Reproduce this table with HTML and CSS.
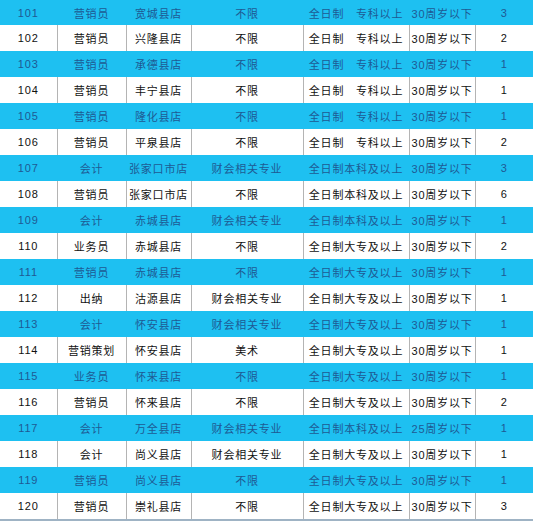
FILE: index.html
```html
<!DOCTYPE html>
<html lang="zh-CN">
<head>
<meta charset="utf-8">
<title>招聘岗位表</title>
<link rel="stylesheet" href="styles.css">
</head>
<body>
<table class="jobs">
  <colgroup>
    <col class="c-no"><col class="c-pos"><col class="c-store"><col class="c-major"><col class="c-edu"><col class="c-age"><col class="c-num">
  </colgroup>
  <tbody>
    <tr class="hl first"><td>101</td><td>营销员</td><td>宽城县店</td><td>不限</td><td>全日制&emsp;专科以上</td><td>30周岁以下</td><td>3</td></tr>
    <tr><td>102</td><td>营销员</td><td>兴隆县店</td><td>不限</td><td>全日制&emsp;专科以上</td><td>30周岁以下</td><td>2</td></tr>
    <tr class="hl"><td>103</td><td>营销员</td><td>承德县店</td><td>不限</td><td>全日制&emsp;专科以上</td><td>30周岁以下</td><td>1</td></tr>
    <tr><td>104</td><td>营销员</td><td>丰宁县店</td><td>不限</td><td>全日制&emsp;专科以上</td><td>30周岁以下</td><td>1</td></tr>
    <tr class="hl"><td>105</td><td>营销员</td><td>隆化县店</td><td>不限</td><td>全日制&emsp;专科以上</td><td>30周岁以下</td><td>1</td></tr>
    <tr><td>106</td><td>营销员</td><td>平泉县店</td><td>不限</td><td>全日制&emsp;专科以上</td><td>30周岁以下</td><td>2</td></tr>
    <tr class="hl"><td>107</td><td>会计</td><td>张家口市店</td><td>财会相关专业</td><td>全日制本科及以上</td><td>30周岁以下</td><td>3</td></tr>
    <tr><td>108</td><td>营销员</td><td>张家口市店</td><td>不限</td><td>全日制本科及以上</td><td>30周岁以下</td><td>6</td></tr>
    <tr class="hl"><td>109</td><td>会计</td><td>赤城县店</td><td>财会相关专业</td><td>全日制本科及以上</td><td>30周岁以下</td><td>1</td></tr>
    <tr><td>110</td><td>业务员</td><td>赤城县店</td><td>不限</td><td>全日制大专及以上</td><td>30周岁以下</td><td>2</td></tr>
    <tr class="hl"><td>111</td><td>营销员</td><td>赤城县店</td><td>不限</td><td>全日制大专及以上</td><td>30周岁以下</td><td>1</td></tr>
    <tr><td>112</td><td>出纳</td><td>沽源县店</td><td>财会相关专业</td><td>全日制大专及以上</td><td>30周岁以下</td><td>1</td></tr>
    <tr class="hl"><td>113</td><td>会计</td><td>怀安县店</td><td>财会相关专业</td><td>全日制大专及以上</td><td>30周岁以下</td><td>1</td></tr>
    <tr><td>114</td><td>营销策划</td><td>怀安县店</td><td>美术</td><td>全日制大专及以上</td><td>30周岁以下</td><td>1</td></tr>
    <tr class="hl"><td>115</td><td>业务员</td><td>怀来县店</td><td>不限</td><td>全日制大专及以上</td><td>30周岁以下</td><td>1</td></tr>
    <tr><td>116</td><td>营销员</td><td>怀来县店</td><td>不限</td><td>全日制大专及以上</td><td>30周岁以下</td><td>2</td></tr>
    <tr class="hl"><td>117</td><td>会计</td><td>万全县店</td><td>财会相关专业</td><td>全日制本科及以上</td><td>25周岁以下</td><td>1</td></tr>
    <tr><td>118</td><td>会计</td><td>尚义县店</td><td>财会相关专业</td><td>全日制大专及以上</td><td>30周岁以下</td><td>1</td></tr>
    <tr class="hl"><td>119</td><td>营销员</td><td>尚义县店</td><td>不限</td><td>全日制大专及以上</td><td>30周岁以下</td><td>1</td></tr>
    <tr class="last"><td>120</td><td>营销员</td><td>崇礼县店</td><td>不限</td><td>全日制大专及以上</td><td>30周岁以下</td><td>3</td></tr>
  </tbody>
</table>
</body>
</html>
```
FILE: styles.css
```css
html, body {
  margin: 0;
  padding: 0;
  background: #ffffff;
}

.jobs {
  width: 533px;
  border-collapse: collapse;
  table-layout: fixed;
  font-family: "Liberation Sans", "Noto Sans CJK SC", sans-serif;
  font-size: 11px;
  color: #111111;
  border-bottom: 2px solid #9fb3c4;
}

.c-no { width: 57px; }
.c-pos { width: 69px; }
.c-store { width: 65px; }
.c-major { width: 112px; }
.c-edu { width: 106px; }
.c-age { width: 66px; }
.c-num { width: 58px; }

.jobs td {
  height: 26px;
  padding: 0;
  text-align: center;
  vertical-align: middle;
  white-space: nowrap;
  letter-spacing: 0.8px;
  border-left: 1px solid #b4b4b4;
}

.jobs td:first-child {
  border-left: none;
}

.jobs tr.first td {
  height: 25px;
}

.jobs tr.hl td {
  background: #1ec0f1;
  color: #1f5a94;
  border-left-color: #1ec0f1;
}
```
